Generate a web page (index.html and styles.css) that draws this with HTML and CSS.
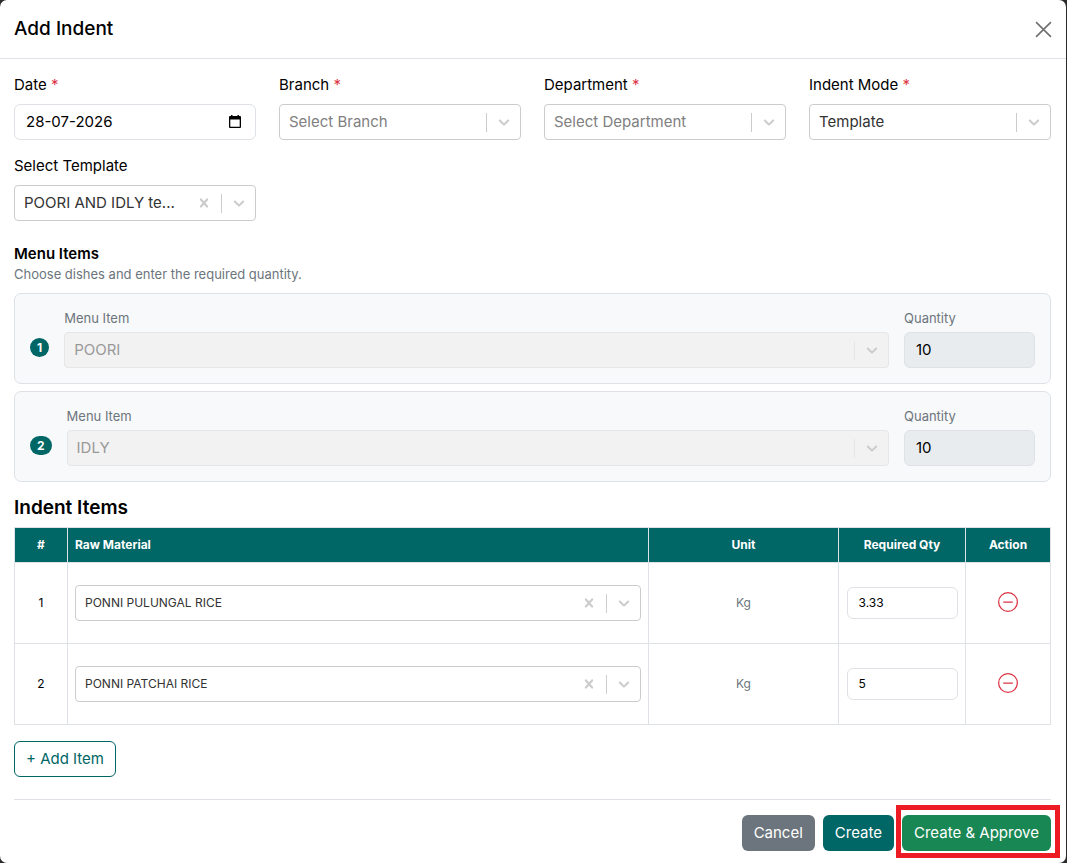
FILE: index.html
```
<!DOCTYPE html>
<html lang="en">
<head>
<meta charset="utf-8">
<meta name="viewport" content="width=device-width, initial-scale=1">
<title>Add Indent</title>
<link rel="stylesheet" href="styles.css">
</head>
<body>
<svg class="sprite" aria-hidden="true">
  <symbol id="chevron" viewBox="0 0 20 20"><path d="M4.516 7.548c0.436-0.446 1.043-0.481 1.576 0l3.908 3.747 3.908-3.747c0.533-0.481 1.141-0.446 1.574 0 0.436 0.445 0.408 1.197 0 1.615-0.406 0.418-4.695 4.502-4.695 4.502-0.217 0.223-0.502 0.335-0.787 0.335s-0.57-0.112-0.789-0.335c0 0-4.287-4.084-4.695-4.502s-0.436-1.17 0-1.615z"/></symbol>
  <symbol id="cross" viewBox="0 0 20 20"><path d="M14.348 14.849c-0.469 0.469-1.229 0.469-1.697 0l-2.651-3.030-2.651 3.029c-0.469 0.469-1.229 0.469-1.697 0-0.469-0.469-0.469-1.229 0-1.697l2.758-3.15-2.759-3.152c-0.469-0.469-0.469-1.228 0-1.697s1.228-0.469 1.697 0l2.652 3.031 2.651-3.031c0.469-0.469 1.228-0.469 1.697 0s0.469 1.229 0 1.697l-2.758 3.152 2.758 3.15c0.469 0.469 0.469 1.229 0 1.698z"/></symbol>
  <symbol id="minus" viewBox="0 0 16 16"><path d="M8 15A7 7 0 1 1 8 1a7 7 0 0 1 0 14m0 1A8 8 0 1 0 8 0a8 8 0 0 0 0 16"/><path d="M4 8a.5.5 0 0 1 .5-.5h7a.5.5 0 0 1 0 1h-7A.5.5 0 0 1 4 8"/></symbol>
</svg>
<main class="modal">
  <header class="modal-header">
    <h1 class="modal-title">Add Indent</h1>
    <button class="close" type="button" aria-label="Close"><svg viewBox="0 0 16 16"><path d="M1 1 15 15M15 1 1 15"/></svg></button>
  </header>
  <form class="modal-body">
    <div class="fields">
      <div class="field">
        <label for="date">Date <span class="req">*</span></label>
        <div class="date-box">
          <input class="input" id="date" type="text" value="28-07-2026">
          <button class="date-btn" type="button" aria-label="Open calendar"><svg viewBox="0 0 14 14"><path fill-rule="evenodd" d="M3 0h1.500v1h5V0H11v1h1q1 0 1 1v10q0 1-1 1H2q-1 0-1-1V2q0-1 1-1h1zM2.300 4.500v7.200h9.400V4.500z"/></svg></button>
        </div>
      </div>
      <div class="field">
        <label for="branch">Branch <span class="req">*</span></label>
        <div class="select">
          <select class="placeholder" id="branch"><option>Select Branch</option></select>
          <div class="marks"><span class="bar"></span><svg class="ico"><use href="#chevron"/></svg></div>
        </div>
      </div>
      <div class="field">
        <label for="department">Department <span class="req">*</span></label>
        <div class="select">
          <select class="placeholder" id="department"><option>Select Department</option></select>
          <div class="marks"><span class="bar"></span><svg class="ico"><use href="#chevron"/></svg></div>
        </div>
      </div>
      <div class="field">
        <label for="mode">Indent Mode <span class="req">*</span></label>
        <div class="select">
          <select id="mode"><option>Template</option></select>
          <div class="marks"><span class="bar"></span><svg class="ico"><use href="#chevron"/></svg></div>
        </div>
      </div>
      <div class="field">
        <label for="template">Select Template</label>
        <div class="select">
          <select class="clearable" id="template"><option>POORI AND IDLY te...</option></select>
          <div class="marks"><button class="clear" type="button" aria-label="Clear template"><svg class="ico"><use href="#cross"/></svg></button><span class="bar"></span><svg class="ico"><use href="#chevron"/></svg></div>
        </div>
      </div>
    </div>

    <section class="menu">
      <h2 class="menu-title">Menu Items</h2>
      <p class="hint">Choose dishes and enter the required quantity.</p>
      <div class="card">
        <span class="badge">1</span>
        <div class="dish">
          <label for="dish1">Menu Item</label>
          <div class="select">
            <select id="dish1" disabled><option>POORI</option></select>
            <div class="marks"><span class="bar"></span><svg class="ico"><use href="#chevron"/></svg></div>
          </div>
        </div>
        <div class="amount">
          <label for="amount1">Quantity</label>
          <input class="input" id="amount1" type="text" value="10" disabled>
        </div>
      </div>
      <div class="card">
        <span class="badge">2</span>
        <div class="dish">
          <label for="dish2">Menu Item</label>
          <div class="select">
            <select id="dish2" disabled><option>IDLY</option></select>
            <div class="marks"><span class="bar"></span><svg class="ico"><use href="#chevron"/></svg></div>
          </div>
        </div>
        <div class="amount">
          <label for="amount2">Quantity</label>
          <input class="input" id="amount2" type="text" value="10" disabled>
        </div>
      </div>
    </section>

    <section>
      <h2 class="items-title">Indent Items</h2>
      <table class="items">
        <colgroup><col class="c-num"><col><col class="c-unit"><col class="c-qty"><col class="c-act"></colgroup>
        <thead>
          <tr><th>#</th><th class="left">Raw Material</th><th>Unit</th><th>Required Qty</th><th>Action</th></tr>
        </thead>
        <tbody>
          <tr>
            <td>1</td>
            <td>
              <div class="select">
                <select class="clearable" aria-label="Raw material 1"><option>PONNI PULUNGAL RICE</option></select>
                <div class="marks"><button class="clear" type="button" aria-label="Clear material 1"><svg class="ico"><use href="#cross"/></svg></button><span class="bar"></span><svg class="ico"><use href="#chevron"/></svg></div>
              </div>
            </td>
            <td class="unit">Kg</td>
            <td><input class="input" type="text" value="3.33" aria-label="Required quantity 1"></td>
            <td><button class="remove" type="button" aria-label="Remove item 1"><svg><use href="#minus"/></svg></button></td>
          </tr>
          <tr>
            <td>2</td>
            <td>
              <div class="select">
                <select class="clearable" aria-label="Raw material 2"><option>PONNI PATCHAI RICE</option></select>
                <div class="marks"><button class="clear" type="button" aria-label="Clear material 2"><svg class="ico"><use href="#cross"/></svg></button><span class="bar"></span><svg class="ico"><use href="#chevron"/></svg></div>
              </div>
            </td>
            <td class="unit">Kg</td>
            <td><input class="input" type="text" value="5" aria-label="Required quantity 2"></td>
            <td><button class="remove" type="button" aria-label="Remove item 2"><svg><use href="#minus"/></svg></button></td>
          </tr>
        </tbody>
      </table>
      <button class="btn btn-add" type="button">+ Add Item</button>
    </section>

    <footer class="actions">
      <button class="btn btn-cancel" type="button">Cancel</button>
      <button class="btn btn-create" type="button">Create</button>
      <button class="btn btn-approve" type="submit">Create &amp; Approve</button>
    </footer>
  </form>
</main>
</body>
</html>
```

FILE: styles.css
```
* { box-sizing: border-box; }

body {
  margin: 0;
  background: #2b2b2b;
  color: #000;
  font-family: Inter, "Liberation Sans", sans-serif;
  font-size: 15px;
  line-height: 22px;
}

button, input, select { font: inherit; color: inherit; }
button { margin: 0; padding: 0; border: 0; background: none; cursor: pointer; }
svg { display: block; fill: currentColor; }
h1, h2, p { margin: 0; }
.sprite { position: absolute; width: 0; height: 0; }

.modal {
  min-height: 100vh;
  margin-right: 1px;
  background: #fff;
  border-radius: 7px;
}

.modal-header {
  display: flex;
  align-items: center;
  justify-content: space-between;
  height: 59px;
  padding: 0 14px 0 14px;
  border-bottom: 1px solid #dee2e6;
}
.modal-title { font-size: 19px; line-height: 28px; font-weight: 500; }
.close svg { width: 17px; height: 17px; fill: none; stroke: #707070; stroke-width: 1.500; }

.modal-body { padding: 15px 15px 12px 14px; }

.fields { display: grid; grid-template-columns: repeat(4, 1fr); gap: 15px 23px; }
.field label { display: block; margin-bottom: 8px; }
.req { color: #dc3545; }

.input {
  display: block;
  width: 100%;
  height: 36px;
  padding: 0 11px 2px;
  border: 1px solid #dee2e6;
  border-radius: 6px;
  background: #fff;
}
.input:disabled { background: #e9ecef; color: #000; }

.date-box { position: relative; }
.date-btn { position: absolute; top: 11px; right: 14px; }
.date-btn svg { width: 14px; height: 14px; }

.select { position: relative; }
.select select {
  display: block;
  width: 100%;
  height: 36px;
  padding: 0 54px 0 9px;
  border: 1px solid #ccc;
  border-radius: 4px;
  background: #fff;
  color: #333;
  appearance: none;
  text-overflow: ellipsis;
}
.select .placeholder { color: #808080; }
.select .clearable { padding-right: 70px; }
.select select:disabled { border-color: #e6e6e6; background: #f2f2f2; color: #999; opacity: 1; }
.marks {
  position: absolute;
  inset: 1px 8px 1px auto;
  display: flex;
  align-items: center;
  gap: 8px;
  color: #ccc;
  pointer-events: none;
}
.clear { pointer-events: auto; }
.ico { width: 18px; height: 18px; }
.bar { width: 1px; height: 19px; background: #ccc; }
select:disabled + .marks .bar { background: #e6e6e6; }

.menu { margin-top: 22px; }
.menu-title { font-size: 15px; line-height: 21px; font-weight: 600; }
.hint { font-size: 13px; line-height: 20px; color: #6c757d; }
.card {
  display: flex;
  align-items: center;
  gap: 15px;
  margin-top: 7px;
  padding: 15px;
  border: 1px solid #dee2e6;
  border-radius: 7px;
  background: #f8f9fa;
}
.hint + .card { margin-top: 9px; }
.card label { display: block; margin-bottom: 4px; font-size: 13px; line-height: 19px; color: #6c757d; }
.badge {
  margin-top: 18px;
  padding: 4px 7px;
  border-radius: 10px;
  background: #006666;
  color: #fff;
  font-size: 12px;
  line-height: 11px;
  font-weight: 700;
}
.dish { flex: 1; }
.amount { width: 131px; }

.items-title { margin: 12px 0 6px; font-size: 19px; line-height: 27px; font-weight: 600; }
.items {
  width: 100%;
  table-layout: fixed;
  border-collapse: collapse;
  font-size: 12px;
  line-height: 18px;
  text-align: center;
}
.c-num { width: 53px; }
.c-unit { width: 190px; }
.c-qty { width: 127px; }
.c-act { width: 85px; }
.items th, .items td { padding: 8px 7px; border: 1px solid #dee2e6; }
.items th { background: #006666; color: #fff; font-weight: 700; }
.items .left { text-align: left; }
.items td { height: 81px; }
.items .unit { color: #6c757d; }
.items td .input { width: 111px; max-width: 100%; height: 32px; margin: 0 auto; }
.remove { display: block; margin: 0 auto 3px; color: #dc3545; }
.remove svg { width: 20px; height: 20px; }

.btn {
  height: 36px;
  padding: 0 11px;
  border: 1px solid transparent;
  border-radius: 6px;
  color: #fff;
}
.btn-add { margin-top: 16px; border-color: #006666; color: #006666; }
.actions {
  display: flex;
  justify-content: flex-end;
  gap: 8px;
  margin-top: 22px;
  padding-top: 15px;
  border-top: 1px solid #dee2e6;
}
.btn-cancel { background: #6c757d; }
.btn-create { background: #006666; }
.btn-approve { position: relative; background: #198754; }
.btn-approve::after {
  content: "";
  position: absolute;
  inset: -11px -10px -8px -7px;
  border: 5px solid #ed1c24;
  pointer-events: none;
}
```
